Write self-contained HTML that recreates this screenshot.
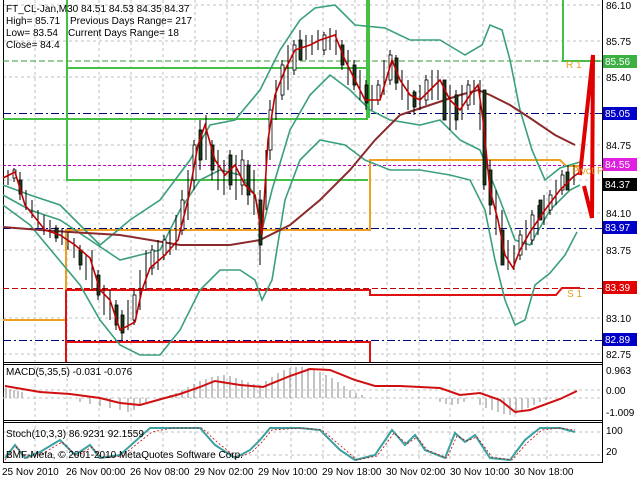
<!DOCTYPE html>
<html><head><meta charset="utf-8"><style>
body{margin:0;width:640px;height:480px;background:#fff;overflow:hidden;font-family:"Liberation Sans",sans-serif}
svg{position:absolute;left:0;top:0}
.t{font-size:10px;fill:#000}
.lb{font-size:10px;fill:#fff}
</style></head><body>
<svg width="640" height="480" viewBox="0 0 640 480">
<g stroke="#c0c0c0" stroke-dasharray="3,3" stroke-width="1">
<path d="M35 0V462M67 0V462M99 0V462M131 0V462M163 0V462M195 0V462M227 0V462M258 0V462M291 0V462M323 0V462M355 0V462M387 0V462M419 0V462M450 0V462M483 0V462M515 0V462M547 0V462"/>
<path d="M3 5H602M3 41H602M3 77H602M3 145H602M3 180H602M3 213H602M3 250H602M3 318H602M3 354H602M3 390H602M3 432H602M3 455H602"/>
</g>
<g stroke="#000" fill="none" stroke-width="1">
<path d="M3.5 0V462.5H602.5V0"/>
<path d="M3 362.5H602M3 364.5H602M3 420.5H602M3 422.5H602"/>
</g>
<path d="M3 61H602" stroke="#3a9a3a" stroke-dasharray="6,3"/>
<path d="M3 113.5H602" stroke="#000080" stroke-dasharray="8,3,2,3"/>
<path d="M3 165.5H602" stroke="#c000c0" stroke-dasharray="3,2"/>
<path d="M3 228.5H602" stroke="#000080" stroke-dasharray="8,3,2,3"/>
<path d="M3 288.5H602" stroke="#c00000" stroke-dasharray="6,3"/>
<path d="M3 340.5H602" stroke="#000080" stroke-dasharray="8,3,2,3"/>
<g fill="none" stroke-width="2">
<path d="M67 0V180H368M3 119H368M67 68H368" stroke="#44c044"/>
<path d="M368 0V118" stroke="#44c044" stroke-width="4"/>
<path d="M563 0V61H600" stroke="#44c044"/>
<path d="M3 320H66V230H370V160H560L566 166H580" stroke="#f0a020"/>
<path d="M66 290V362M66 290H370V295H556L562 288H580M66 342H370V362" stroke="#e01010"/>
</g>
<g fill="none" stroke="#3aa07a" stroke-width="1.6">
<path d="M3 185L30 195L60 205L80 225L100 245L130 220L160 200L190 160L210 125L235 120L260 90L280 50L300 20L315 8L335 5L355 25L385 28L410 40L440 40L465 55L482 45L490 25L502 30L510 60L520 110L532 150L545 180L560 168L580 162"/>
<path d="M3 195L30 210L60 220L90 240L120 260L140 255L160 250L180 210L200 180L220 170L240 175L255 195L262 230L272 190L290 130L310 95L330 75L350 90L370 110L390 120L420 125L440 120L460 140L480 150L500 200L515 240L530 245L550 210L570 190L580 185"/>
<path d="M3 205L30 225L55 255L80 285L100 320L120 345L140 355L160 355L180 330L200 290L220 270L240 270L255 280L262 300L272 280L285 200L300 160L320 140L345 145L365 160L390 170L420 170L450 175L470 180L485 210L495 260L505 300L515 325L525 320L535 285L550 273L565 255L577 232"/>
</g>
<path d="M3 227L40 230L70 232L120 235L180 245L230 245L260 240L290 225L320 200L350 170L375 140L400 115L430 105L460 95L478 90L490 95L510 105L530 118L555 135L575 145" fill="none" stroke="#8b2a2a" stroke-width="2"/>
<!-- candles (wicks) -->
<g stroke="#000" stroke-width="1">
<path d="M8 170V185M14 168V182M20 172V200M26 190V210M32 200V218M38 210V228M44 215V235M50 220V238M56 225V242M62 228V245M68 232V250M74 238V258M80 245V270M86 255V280M92 250V290M98 270V300M104 285V315M110 290V320M116 300V330M122 310V340M128 300V330M134 290V325M140 270V310M146 250V290M152 245V275M158 240V270M164 235V260M170 230V255M176 215V250M182 190V235M188 170V220M194 140V190M200 120V170M206 115V160M212 140V180M218 150V190M224 160V195M230 150V190M236 155V200M242 150V195M248 160V205M254 170V215M260 190V265M266 150V210M270 100V160M276 80V120M282 60V100M288 45V90M294 40V75M300 30V60M306 35V60M312 35V55M318 30V50M324 32V55M330 28V50M336 30V55M342 40V70M348 50V85M354 60V90M360 70V100M366 80V110M372 85V110M378 80V105M384 60V95M390 50V85M396 55V90M402 70V100M408 80V110M414 90V115M420 85V110M426 75V105M432 70V100M438 70V100M444 80V120M450 85V130M456 90V130M462 85V120M468 80V110M474 80V105M480 80V130M484 110V190M490 160V215M496 190V235M502 210V265M508 240V270M514 245V270M520 230V260M526 220V250M532 210V245M538 205V235M544 195V225M550 190V215M556 180V205M562 170V195M568 165V190M574 165V185"/>
</g>
<g stroke="#000" fill="#1a3a1a" stroke-width="0.8">
<rect x="19" y="180" width="3" height="14"/><rect x="55" y="228" width="3" height="10"/><rect x="79" y="250" width="3" height="15"/><rect x="97" y="275" width="3" height="20"/><rect x="115" y="305" width="3" height="20"/><rect x="121" y="315" width="3" height="18"/><rect x="199" y="130" width="3" height="30"/><rect x="211" y="145" width="3" height="25"/><rect x="229" y="155" width="3" height="30"/><rect x="247" y="165" width="3" height="30"/><rect x="259" y="200" width="3" height="45"/><rect x="299" y="40" width="3" height="20"/><rect x="341" y="45" width="3" height="20"/><rect x="353" y="65" width="3" height="20"/><rect x="365" y="85" width="3" height="18"/><rect x="395" y="58" width="3" height="25"/><rect x="413" y="92" width="3" height="15"/><rect x="443" y="80" width="3" height="40"/><rect x="455" y="95" width="3" height="25"/><rect x="483" y="90" width="3" height="95"/><rect x="489" y="170" width="3" height="35"/><rect x="501" y="230" width="3" height="35"/><rect x="539" y="200" width="3" height="20"/><rect x="566" y="172" width="3" height="18"/>
</g>
<g stroke="#000" fill="#fff" stroke-width="0.8">
<rect x="13" y="170" width="3" height="8"/><rect x="133" y="295" width="3" height="25"/><rect x="151" y="250" width="3" height="18"/><rect x="163" y="240" width="3" height="15"/><rect x="181" y="200" width="3" height="30"/><rect x="193" y="145" width="3" height="35"/><rect x="241" y="160" width="3" height="25"/><rect x="269" y="110" width="3" height="40"/><rect x="281" y="65" width="3" height="30"/><rect x="293" y="45" width="3" height="25"/><rect x="323" y="35" width="3" height="15"/><rect x="377" y="85" width="3" height="15"/><rect x="389" y="55" width="3" height="25"/><rect x="425" y="80" width="3" height="20"/><rect x="467" y="85" width="3" height="20"/><rect x="519" y="235" width="3" height="20"/><rect x="531" y="215" width="3" height="25"/><rect x="549" y="195" width="3" height="15"/><rect x="561" y="175" width="3" height="15"/>
</g>
<path d="M3 178L15 172L25 205L45 230L60 235L75 245L90 258L100 290L110 300L120 330L135 322L142 290L150 268L165 255L178 240L188 200L198 145L205 125L215 160L225 175L235 165L245 185L255 195L262 235L268 140L275 95L285 70L295 50L310 45L320 40L335 35L345 60L355 80L365 100L380 100L392 60L400 80L410 95L420 100L430 90L440 80L450 100L460 110L470 95L478 85L483 120L490 190L498 220L505 255L513 268L520 250L530 232L545 210L560 190L573 177L580 172" fill="none" stroke="#c00000" stroke-width="1.6"/>
<path d="M580 175L593 55L592 218M584 186L592 218" fill="none" stroke="#e00000" stroke-width="4"/>
<text x="566" y="68" font-size="10" fill="#e0a020">R 1</text>
<text x="567" y="297" font-size="10" fill="#e0a020">S 1</text>
<text x="572" y="174" font-size="10" fill="#e0a020">Pivot P</text>
<g class="t">
<text x="606" y="9">86.10</text><text x="606" y="45">85.75</text><text x="606" y="81">85.40</text><text x="606" y="149">84.75</text><text x="606" y="217">84.10</text><text x="606" y="254">83.75</text><text x="606" y="322">83.10</text><text x="606" y="358">82.75</text>
<text x="606" y="374">0.963</text><text x="606" y="394">0.00</text><text x="606" y="416">-1.009</text><text x="606" y="434">100</text><text x="606" y="455">20</text>
</g>
<rect x="603" y="55" width="34" height="13" fill="#3cb043"/><text class="lb" x="605" y="65">85.56</text>
<rect x="603" y="107" width="34" height="13" fill="#0000c8"/><text class="lb" x="605" y="117">85.05</text>
<rect x="603" y="158" width="34" height="13" fill="#e020e0"/><text class="lb" x="605" y="168">84.55</text>
<rect x="603" y="178" width="34" height="13" fill="#000"/><text class="lb" x="605" y="188">84.37</text>
<rect x="603" y="221" width="34" height="13" fill="#0000c8"/><text class="lb" x="605" y="231">83.97</text>
<rect x="603" y="281" width="34" height="13" fill="#e00000"/><text class="lb" x="605" y="291">83.39</text>
<rect x="603" y="333" width="34" height="13" fill="#0000c8"/><text class="lb" x="605" y="343">82.89</text>
<g stroke="#b0b0b0" stroke-width="1.5">
<path d="M6 398V388M10 398V389M14 398V390M18 398V391M22 398V392M170 398V395M176 398V393M182 398V390M188 398V387M194 398V384M200 398V381M206 398V379M212 398V377M218 398V376M224 398V375M230 398V376M236 398V378M242 398V380M248 398V382M254 398V384M260 398V385M266 398V381M272 398V377M278 398V373M284 398V370M290 398V368M296 398V367M302 398V367M308 398V368M314 398V370M320 398V372M326 398V375M332 398V378M338 398V382M344 398V386M350 398V390M356 398V393M362 398V395M80 398V402M90 398V404M100 398V406M110 398V408M120 398V410M128 398V412M134 398V410M140 398V406M146 398V402M440 398V402M446 398V404M452 398V405M458 398V404M464 398V402M480 398V405M486 398V408M492 398V410M498 398V412M504 398V414M510 398V415M516 398V414M522 398V411M528 398V408M534 398V405M540 398V402M546 398V400"/>
</g>
<path d="M3 398H602" stroke="#c0c0c0" stroke-dasharray="3,3"/>
<path d="M5 386L40 392L70 394L100 398L120 403L140 405L165 398L180 394L200 387L215 381L240 385L263 387L290 376L310 369L330 370L355 380L375 386L400 386L440 388L460 395L480 393L500 400L515 412L530 410L560 399L577 391" fill="none" stroke="#d01010" stroke-width="2"/>
<text class="t" x="6" y="375">MACD(5,35,5) -0.031 -0.076</text>
<path d="M5 458L15 445L25 458L40 452L60 440L75 455L90 445L100 458L120 455L150 428L170 428L200 428L215 445L235 458L250 450L260 440L270 428L300 428L320 430L340 450L355 460L375 455L392 430L405 445L415 435L425 450L445 458L455 433L465 442L475 435L490 458L510 460L525 440L540 428L560 428L575 432" fill="none" stroke="#3aa0a0" stroke-width="2"/>
<path d="M5 460L17 447L27 458L42 454L62 442L77 456L92 447L102 458L122 456L152 432L172 428L202 428L217 442L237 458L252 452L262 442L272 430L302 428L322 430L342 447L357 460L377 456L394 433L407 444L417 437L427 450L447 458L457 436L467 441L477 437L492 457L512 460L527 443L542 430L560 428L575 430" fill="none" stroke="#c00000" stroke-width="0.8" stroke-dasharray="2,2"/>
<text class="t" x="6" y="437">Stoch(10,3,3) 86.9231 92.1559</text>
<text class="t" x="6" y="458">BMF-Meta, © 2001-2010 MetaQuotes Software Corp.</text>
<g class="t">
<text x="2" y="475">25 Nov 2010</text><text x="66" y="475">26 Nov 00:00</text><text x="130" y="475">26 Nov 08:00</text><text x="194" y="475">29 Nov 02:00</text><text x="258" y="475">29 Nov 10:00</text><text x="322" y="475">29 Nov 18:00</text><text x="386" y="475">30 Nov 02:00</text><text x="450" y="475">30 Nov 10:00</text><text x="514" y="475">30 Nov 18:00</text>
</g>
<g class="t">
<text x="6" y="12">FT_CL-Jan,M30  84.51 84.53 84.35 84.37</text>
<text x="6" y="24">High= 85.71</text><text x="6" y="36">Low= 83.54</text><text x="6" y="48">Close= 84.4</text>
<text x="70" y="24">Previous Days Range= 217</text><text x="68" y="36">Current Days Range= 18</text>
</g>
</svg>
</body></html>
